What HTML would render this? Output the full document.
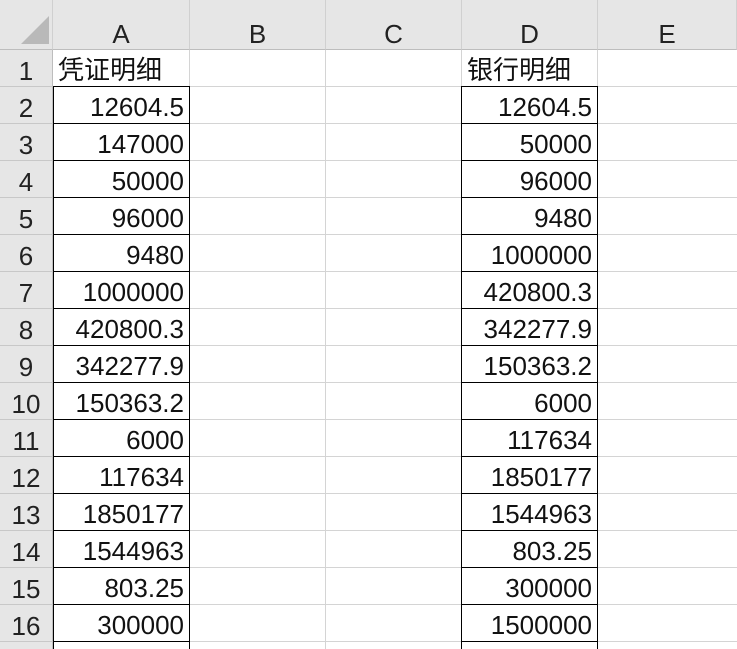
<html><head><style>
html,body{margin:0;width:737px;height:649px;overflow:hidden;background:#fff;font-family:"Liberation Sans","Noto Sans CJK SC",sans-serif;position:relative}
.a{position:absolute;box-sizing:border-box}
.h{background:#e6e6e6;color:#222;font-size:26px;text-align:center;line-height:50px;padding-top:9px;top:0;height:50px;border-right:1px solid #d0d0d0;border-bottom:1px solid #bdbdbd}
.r{background:#e6e6e6;color:#222;font-size:26px;text-align:center;line-height:37px;padding-top:3px;left:0;width:53px;height:37px;border-bottom:1px solid #c8c8c8;border-right:1px solid #bdbdbd}
.g{background:#d4d4d4}
.c{font-size:26px;color:#111;line-height:37px;padding-top:2px;height:37px;text-align:right;padding-right:5px}
.b{border:1px solid #000}
</style></head><body>
<div class="a h" style="left:0;width:53px"></div>
<svg class="a" style="left:20px;top:15px" width="30" height="30"><polygon points="29,1 29,29 1,29" fill="#b9b9b9"/></svg>
<div class="a h" style="left:53px;width:137px">A</div>
<div class="a h" style="left:190px;width:136px">B</div>
<div class="a h" style="left:326px;width:136px">C</div>
<div class="a h" style="left:462px;width:136px">D</div>
<div class="a h" style="left:598px;width:139px">E</div>
<div id="rows"></div>
<script>
var A=["凭证明细","12604.5","147000","50000","96000","9480","1000000","420800.3","342277.9","150363.2","6000","117634","1850177","1544963","803.25","300000",""];
var D=["银行明细","12604.5","50000","96000","9480","1000000","420800.3","342277.9","150363.2","6000","117634","1850177","1544963","803.25","300000","1500000",""];
var h="";
[190,326,462,598].forEach(function(x){h+='<div class="a g" style="left:'+(x-1)+'px;top:50px;width:1px;height:600px"></div>'});
for(var i=0;i<17;i++){var t=50+i*37;
h+='<div class="a g" style="left:53px;top:'+(t+36)+'px;width:684px;height:1px"></div>';
h+='<div class="a r" style="top:'+t+'px">'+(i+1)+'</div>';
if(i==0){h+='<div class="a c" style="left:58px;top:'+t+'px;text-align:left">'+A[0]+'</div><div class="a c" style="left:467px;top:'+t+'px;text-align:left">'+D[0]+'</div>';}
else{h+='<div class="a c b" style="left:53px;top:'+(t-1)+'px;width:137px;height:38px">'+A[i]+'</div>';
h+='<div class="a c b" style="left:461px;top:'+(t-1)+'px;width:137px;height:38px">'+D[i]+'</div>';}}
document.getElementById("rows").innerHTML=h;
</script>
</body></html>
